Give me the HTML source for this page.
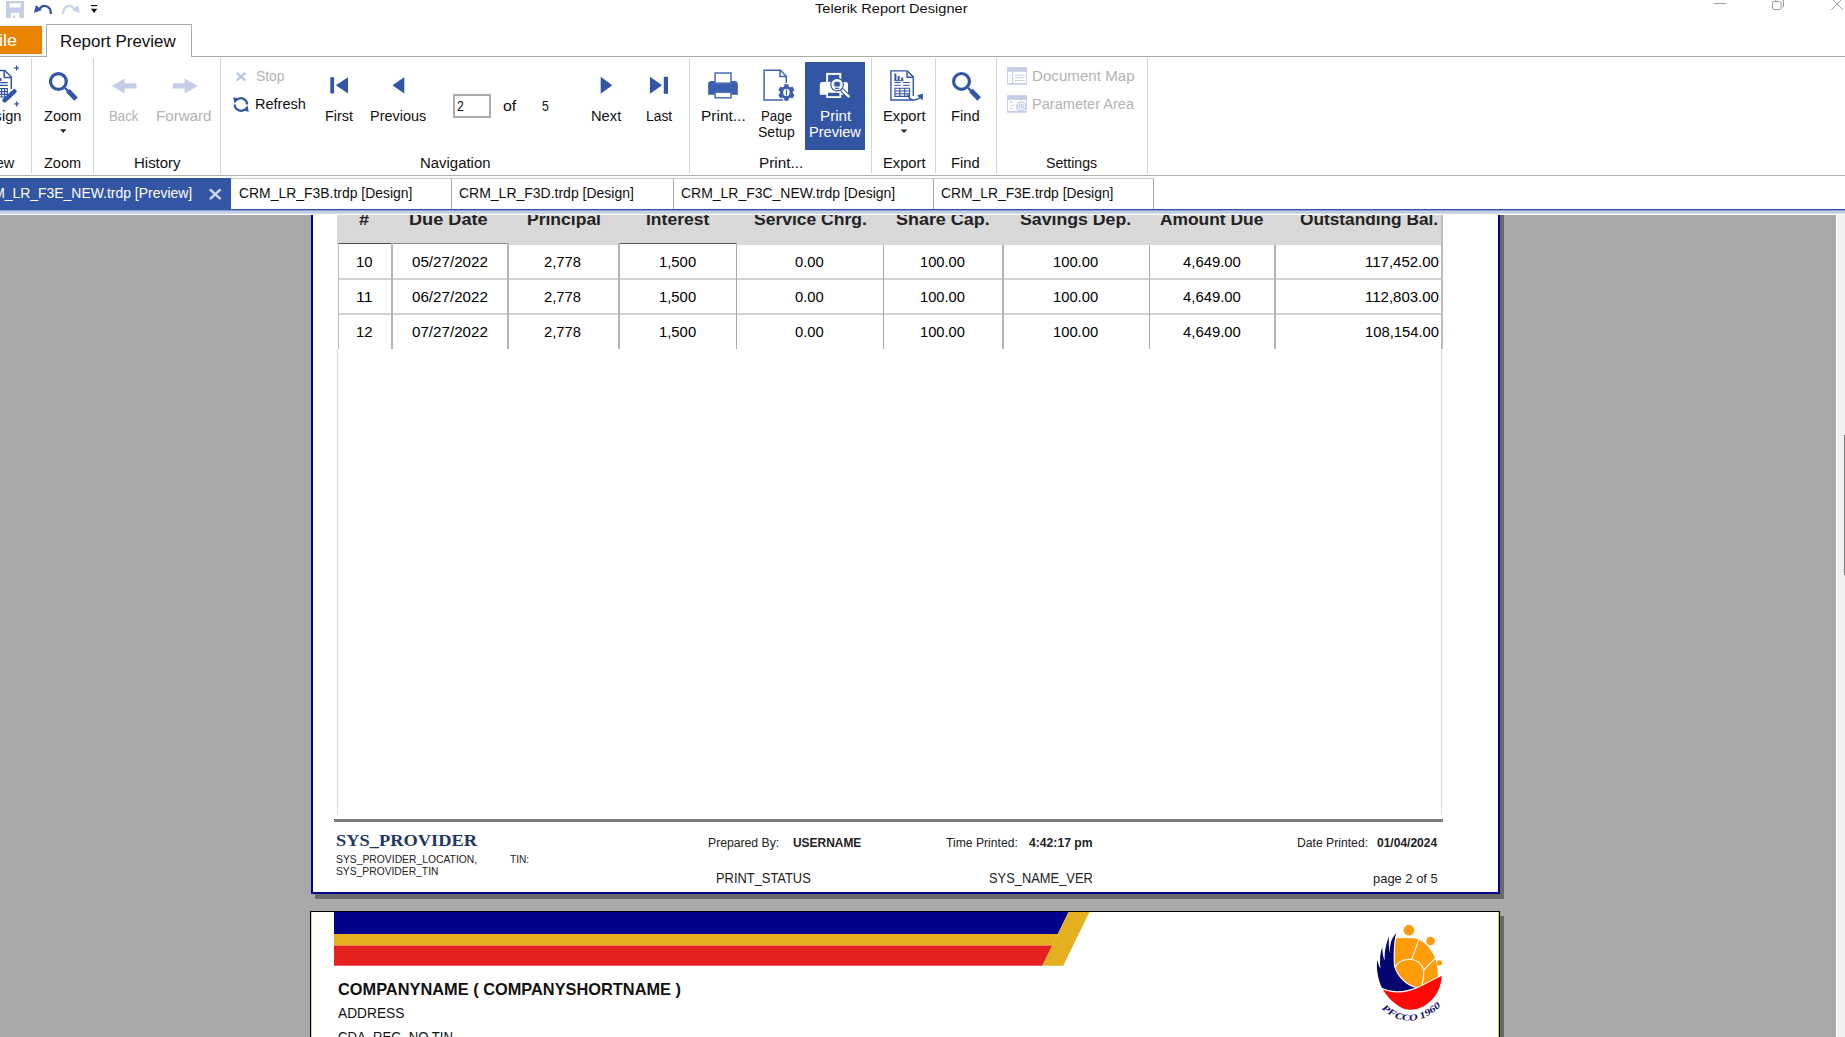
<!DOCTYPE html>
<html lang="en">
<head>
<meta charset="utf-8">
<title>Telerik Report Designer</title>
<style>
html,body{margin:0;padding:0}
body{width:1845px;height:1037px;overflow:hidden;background:#fff;position:relative;font-family:"Liberation Sans",sans-serif;color:#1e1e1e}
.a{position:absolute}
.t{position:absolute;white-space:pre;line-height:1;transform-origin:0 0}
svg{position:absolute;overflow:visible}
#vp{position:absolute;left:0;top:215px;width:1836px;height:822px;overflow:hidden;background:#a9a9a9}
.sep{position:absolute;top:58px;width:1px;height:115px;background:#d4d4d4}
.vl{position:absolute;top:30px;height:104px;background:#b4b4b4}
.hl{position:absolute;left:338px;width:1105px;height:2px;background:#d2d2d2}
</style>
</head>
<body>
<!-- ===== title bar / quick access toolbar ===== -->
<div id="titlebar" class="a" style="left:0;top:0;width:1845px;height:24px;background:#fff"></div>
<!-- save (disabled) -->
<svg id="ico-save" style="left:6px;top:1px" width="18" height="17" viewBox="0 0 18 17"><path fill="#c3cde6" fill-rule="evenodd" d="M0 0H18V17H0Z M3.5 2.2V6.4H14.5V2.2Z M4.7 11.7V17H13.2V11.7Z"/><rect x="6.9" y="14.4" width="2.4" height="2.6" fill="#c3cde6"/></svg>
<!-- undo -->
<svg id="ico-undo" style="left:33px;top:3px" width="20" height="12" viewBox="33 3 20 12"><path d="M39.5 8.8 C43.2 3.6 50.8 5.6 50.9 14.0" stroke="#3356a4" stroke-width="2.2" fill="none"/><path d="M35.8 5.0 L41.8 9.9 L34.0 12.9 Z" fill="#3356a4"/></svg>
<!-- redo (disabled) -->
<svg id="ico-redo" style="left:61px;top:3px" width="20" height="12" viewBox="61 3 20 12"><path d="M74.4 8.8 C70.7 3.6 63.1 5.6 63.0 14.0" stroke="#c9d3ea" stroke-width="2.2" fill="none"/><path d="M78.1 5.0 L72.1 9.9 L79.9 12.9 Z" fill="#c9d3ea"/></svg>
<!-- qat dropdown -->
<svg id="ico-qat" style="left:90px;top:4px" width="8" height="10" viewBox="90 4 8 10"><rect x="90.9" y="5" width="6.4" height="1.2" fill="#111"/><path d="M90.9 8.8 H97.3 L94.1 12.9 Z" fill="#111"/></svg>
<!-- window controls -->
<svg id="win-ctl" style="left:1700px;top:0" width="145" height="16" viewBox="1700 0 145 16"><g stroke="#9a9a9a" stroke-width="1" fill="none"><path d="M1714 3.5 H1726"/><rect x="1772.5" y="1.5" width="8.5" height="8" rx="1.5"/><path d="M1775.5 1.5 V0.8 Q1775.5 -0.5 1777 -0.5 H1782 Q1783.5 -0.5 1783.5 1 V6 Q1783.5 7.2 1782.3 7.4"/><path d="M1831.2 -2 L1843 9.9 M1843 -2 L1831.2 9.9"/></g></svg>

<!-- ===== ribbon tab row ===== -->
<div class="a" style="left:0;top:56px;width:1845px;height:1px;background:#ababab"></div>
<div id="filebtn" class="a" style="left:0;top:26px;width:42px;height:28px;background:#e98300"></div>
<div id="tab-report-preview" class="a" style="left:46px;top:24px;width:144px;height:32px;border:1px solid #ababab;border-bottom:none;background:#fff"></div>
<!-- ===== ribbon body ===== -->
<div class="sep" style="left:31px"></div>
<div class="sep" style="left:93px"></div>
<div class="sep" style="left:220px"></div>
<div class="sep" style="left:689px"></div>
<div class="sep" style="left:871px"></div>
<div class="sep" style="left:935px"></div>
<div class="sep" style="left:996px"></div>
<div class="sep" style="left:1147px"></div>
<div id="pagebox" class="a" style="left:453px;top:94px;width:34px;height:20px;border:2px solid #a9aab0;background:#fff"></div>
<div id="btn-printpreview" class="a" style="left:805px;top:62px;width:60px;height:88px;background:#3356a4"></div>
<svg id="ribbon-icons" style="left:0;top:57px" width="1200" height="118" viewBox="0 57 1200 118">
<g id="ico-design" fill="none" stroke="#3356a4" stroke-width="1.5">
  <path d="M-2 70.5 H4.8 L11.3 77 V89"/><path d="M4.2 70.8 V77.4 H11"/>
  <path d="M-2 82.7 H7.8 M-2 85.4 H7.8" stroke-width="1.2"/>
  <path d="M-2 88.6 H7.4 V97 H-2 M-2 91.6 H7.4 M-2 94.4 H7.4 M1.6 88.6 V97 M4.6 88.6 V97" stroke-width="1.1"/>
  <path d="M14.4 91.4 L4.6 100.2" stroke-width="4.6" stroke-linecap="round"/>
  <path d="M16.6 65.6 V70.6 M14.1 68.1 H19.1 M16.6 101.4 V106.4 M14.1 103.9 H19.1" stroke-width="1.3"/>
  <path d="M-1 78 H1.5 V81 H-1" fill="#3356a4" stroke="none"/>
</g>
<g id="ico-zoom" fill="none" stroke="#3356a4"><circle cx="58.4" cy="81.5" r="7.9" stroke-width="3.2"/><path d="M65 88 L70 93" stroke-width="2.4"/><path d="M69.6 92.4 L74.4 97.4" stroke-width="4.9" stroke-linecap="square"/></g>
<g id="ico-back" fill="#c3cde6"><path d="M111.7 85.9 L124.7 78.4 V83.3 H136.4 V88.6 H124.7 V93.4 Z"/></g>
<g id="ico-forward" fill="#c3cde6"><path d="M197.8 85.9 L184.6 78.4 V83.3 H172.9 V88.6 H184.6 V93.4 Z"/></g>
<g id="ico-stop" fill="none" stroke="#bcc8e3" stroke-width="2.3"><path d="M236.6 72.8 L245.4 80.6 M245.4 72.8 L236.6 80.6"/></g>
<g id="ico-refresh" fill="none" stroke="#3356a4" stroke-width="2.2">
  <path d="M237.2 99.6 A6.2 6.2 0 0 1 247.2 104.5"/><path d="M244.8 109.4 A6.2 6.2 0 0 1 234.8 104.5"/>
  <path d="M233.2 97.2 L239.4 98.4 L234.4 103.4 Z" fill="#3356a4" stroke="none"/><path d="M248.8 111.8 L242.6 110.6 L247.6 105.6 Z" fill="#3356a4" stroke="none"/>
</g>
<g id="ico-nav" fill="#3356a4">
  <rect x="330.3" y="77.2" width="3.8" height="16.2"/><path d="M335.9 85.3 L348 77.2 V93.4 Z"/>
  <path d="M392.4 85.3 L404.3 77.2 V93.4 Z"/>
  <path d="M612.3 85.3 L600.7 76.8 V93.8 Z"/>
  <path d="M662 85.3 L650 76.8 V93.8 Z"/><rect x="663.8" y="76.8" width="4.2" height="17"/>
</g>
<g id="ico-print"><path d="M708.1 94.8 V84.4 Q708.1 81 711.5 81 H734.4 Q737.8 81 737.8 84.4 V94.8 Z" fill="#3a5fad"/><rect x="715.1" y="73" width="15.9" height="10.2" fill="#fff" stroke="#4a6cb5" stroke-width="1.5"/><rect x="715.1" y="92.2" width="15.9" height="5.6" fill="#fff" stroke="#4a6cb5" stroke-width="1.5"/></g>
<g id="ico-pagesetup" fill="none" stroke="#4065b0" stroke-width="1.5"><path d="M783 100.1 H764.1 V70.3 H780.4 L786.3 76.2 V83"/><path d="M780 70.6 V76.6 H786"/>
  <g fill="#3a5fad" stroke="none"><circle cx="786.4" cy="92.5" r="6.5"/>
  <g transform="translate(786.4 92.5)"><rect x="-2.2" y="-8.2" width="4.4" height="16.4" rx="0.7"/><rect x="-2.2" y="-8.2" width="4.4" height="16.4" rx="0.7" transform="rotate(60)"/><rect x="-2.2" y="-8.2" width="4.4" height="16.4" rx="0.7" transform="rotate(120)"/></g></g>
  <ellipse cx="786.4" cy="92.4" rx="3.2" ry="3.6" fill="#fff" stroke="none"/><path d="M786.4 89.4 V95.4" stroke="#3a5fad" stroke-width="1.1"/>
</g>
<g id="ico-printpreview"><path d="M819.8 94.8 V84.5 Q819.8 82.1 822.2 82.1 H845.6 Q848 82.1 848 84.5 V94.8 Z" fill="#fff"/><rect x="827.1" y="73.9" width="13.2" height="9" fill="#3356a4" stroke="#fff" stroke-width="2"/><rect x="827.1" y="91.9" width="13.2" height="5.2" fill="#3356a4" stroke="#fff" stroke-width="1.8"/>
  <circle cx="837.1" cy="84.6" r="6.9" fill="#3356a4"/><circle cx="837.1" cy="84.6" r="4.9" fill="#dfe5f2" stroke="#fff" stroke-width="1.6"/><rect x="834.4" y="82" width="5.4" height="4.4" rx="1" fill="#3356a4"/><path d="M835 88.4 H839.2" stroke="#3356a4" stroke-width="1"/>
  <path d="M842.6 90.6 L848.6 96.4" stroke="#3356a4" stroke-width="4.4" stroke-linecap="round"/><path d="M842.6 90.6 L848.6 96.4" stroke="#fff" stroke-width="2.4" stroke-linecap="round"/>
</g>
<g id="ico-export" fill="none" stroke="#3356a4" stroke-width="1.4"><path d="M912.6 100 H890.9 V70.9 H907.3 L913.3 76.9 V96"/><path d="M907 71.2 V77.2 H913"/>
  <path d="M895.4 73.6 V80.6 M898.6 76 V80.6 M902.2 77.4 V80.6" stroke-width="2"/><path d="M894.4 80.7 H903.4" stroke-width="1"/>
  <path d="M894.5 82.5 H900.5 M903 82.5 H909.8 M894.5 85.3 H900.5 M903 85.3 H909.8" stroke-width="1"/>
  <path d="M894.9 88.2 H909.6 V96.4 H894.9 Z M894.9 91 H909.6 M894.9 93.7 H909.6 M899.8 88.2 V96.4 M904.7 88.2 V96.4" stroke-width="1.1"/>
  <path d="M907.4 94.2 Q909.6 101.4 916.4 99.6 Q919.6 98.6 920.6 96" stroke-width="1.5"/><path d="M923 93.6 L922.6 100.6 L917 95.4 Z" fill="#3356a4" stroke="none"/>
</g>
<g id="ico-find" fill="none" stroke="#3356a4"><circle cx="961.5" cy="81.4" r="7.9" stroke-width="3.2"/><path d="M968.1 87.9 L973.1 92.9" stroke-width="2.4"/><path d="M972.7 92.3 L977.5 97.3" stroke-width="4.9" stroke-linecap="square"/></g>
<g id="ico-docmap"><rect x="1007.1" y="67.1" width="19.9" height="17.7" fill="#c3cde6"/><rect x="1008" y="71.8" width="4" height="11.3" fill="#fff"/><rect x="1013.1" y="71.8" width="13.1" height="11.3" fill="#fff"/>
  <path d="M1015 75.4 H1024.8 M1015 77.6 H1024.8 M1015 80.5 H1024.8" stroke="#c3cde6" stroke-width="0.9"/><path d="M1010 75 V76 M1010 77.2 V78.2 M1010 80 V81" stroke="#c3cde6" stroke-width="1"/></g>
<g id="ico-paramarea"><rect x="1007.1" y="95.2" width="19.9" height="17.5" fill="#c3cde6"/><rect x="1008" y="99.9" width="18.2" height="11.1" fill="#fff"/>
  <rect x="1010.2" y="101.2" width="1.8" height="1.8" fill="#c3cde6"/><path d="M1010.2 105.4 H1011.2 M1012 105.4 H1014.8 M1010.2 108.4 H1013" stroke="#c3cde6" stroke-width="0.9"/>
  <circle cx="1021.3" cy="106.4" r="4.6" fill="#eef1f8" stroke="#c3cde6" stroke-width="1.3"/><path d="M1019.4 104.4 V108.6 M1021.4 103.8 V109 M1023.4 104.4 V108.6" stroke="#c3cde6" stroke-width="1"/></g>
<g id="drop-arrows" fill="#222"><path d="M60.1 129.3 H66.3 L63.2 133 Z"/><path d="M900.7 129.4 H907.3 L904 133 Z"/></g>
</svg>

<div class="a" style="left:0;top:175px;width:1845px;height:1px;background:#b0b0b0"></div>
<!-- ===== document tabs ===== -->
<div class="a" style="left:231px;top:178px;width:922px;height:1px;background:#c8c8c8"></div>
<div id="doctab-active" class="a" style="left:0;top:178px;width:231px;height:31px;background:#3356a4"></div>
<div class="a" style="left:451px;top:178px;width:1px;height:31px;background:#ababab"></div>
<div class="a" style="left:673px;top:178px;width:1px;height:31px;background:#ababab"></div>
<div class="a" style="left:933px;top:178px;width:1px;height:31px;background:#ababab"></div>
<div class="a" style="left:1153px;top:178px;width:1px;height:31px;background:#ababab"></div>
<svg id="tab-close" style="left:209px;top:188px" width="13" height="12" viewBox="0 0 13 12"><path d="M0.9 1.3 L11.6 11.1 M11.6 1.3 L0.9 11.1" stroke="#cdd6ea" stroke-width="2.5" fill="none"/></svg>
<div class="a" style="left:0;top:209px;width:1845px;height:1px;background:#3356a4"></div>
<div class="a" style="left:0;top:210px;width:1845px;height:1px;background:#8c9fcc"></div>
<div class="a" style="left:0;top:211px;width:1845px;height:2px;background:#c4cfe7"></div>
<div class="a" style="left:0;top:213px;width:1845px;height:1px;background:#d2daed"></div>
<!-- ===== scrollbar ===== -->
<div class="a" style="left:1837px;top:215px;width:8px;height:822px;background:#f0f0f0"></div>
<div class="a" style="left:1844px;top:435px;width:1px;height:140px;background:#7a7a7a"></div>
<!-- ===== report viewport ===== -->
<div id="vp">
  <!-- page 1 -->
  <div class="a" style="left:1500px;top:-10px;width:4px;height:694px;background:#696969"></div>
  <div class="a" style="left:315px;top:679px;width:1189px;height:5px;background:#696969"></div>
  <div id="page1" class="a" style="left:311px;top:-10px;width:1185px;height:685px;border:2px solid #00008b;background:#fff"></div>
  <!-- table header -->
  <div class="a" style="left:337px;top:0;width:1104px;height:30px;background:#d9d9d9"></div>
  <!-- detail side lines -->
  <div class="a" style="left:337px;top:134px;width:1px;height:466px;background:#dcdcdc"></div>
  <div class="a" style="left:1441px;top:134px;width:1px;height:466px;background:#dcdcdc"></div>
  <!-- white cell tops for #, Due Date, Interest -->
  <div class="a" style="left:338px;top:28px;width:170px;height:2px;background:#fff"></div>
  <div class="a" style="left:620px;top:28px;width:117px;height:2px;background:#fff"></div>
  <div class="a" style="left:338px;top:28px;width:54px;height:1px;background:#4c4c4c"></div>
  <div class="a" style="left:392px;top:28px;width:116px;height:1px;background:#8c8c8c"></div>
  <div class="a" style="left:620px;top:28px;width:117px;height:1px;background:#555"></div>
  <!-- row lines -->
  <div class="hl" style="top:63px"></div>
  <div class="hl" style="top:98px"></div>
  <!-- column lines -->
  <div class="vl" style="left:338px;width:1px;top:28px;height:106px;background:#bdbdbd"></div>
  <div class="vl" style="left:391px;width:2px;top:28px;height:106px"></div>
  <div class="vl" style="left:507px;width:2px;top:28px;height:106px"></div>
  <div class="vl" style="left:618px;width:2px;top:28px;height:106px"></div>
  <div class="vl" style="left:736px;width:1px;top:28px;height:106px;background:#aaa"></div>
  <div class="vl" style="left:883px;width:1px;background:#aaa"></div>
  <div class="vl" style="left:1002px;width:2px"></div>
  <div class="vl" style="left:1149px;width:1px;background:#aaa"></div>
  <div class="vl" style="left:1274px;width:2px"></div>
  <div class="vl" style="left:1441px;width:2px;top:0;height:134px;background:#bdbdbd"></div>
  <!-- footer rule -->
  <div class="a" style="left:334px;top:604px;width:1109px;height:3px;background:#7c7c7c"></div>
  <!-- page 2 -->
  <div class="a" style="left:1500px;top:701px;width:4px;height:200px;background:#696969"></div>
  <div id="page2" class="a" style="left:310px;top:696px;width:1188px;height:200px;border:1px solid #000;background:#fff"></div>
  <div class="a" style="left:311px;top:697px;width:1px;height:200px;background:#cfe07e"></div>
  <div class="a" style="left:1498px;top:697px;width:1px;height:200px;background:#c2d663"></div>
  <svg style="left:334px;top:697px" width="760" height="54" viewBox="334 912 760 54">
    <polygon points="334,912 1068.6,912 1057.9,934 334,934" fill="#00008b"/>
    <polygon points="334,934 1057.9,934 1052.3,945.6 334,945.6" fill="#e5b020"/>
    <polygon points="334,945.6 1052.3,945.6 1042.4,965.8 334,965.8" fill="#e32121"/>
    <polygon points="1068.6,912 1089.4,912 1063.2,965.8 1042.4,965.8" fill="#e5b020"/>
  </svg>
  <svg id="logo" style="left:1360px;top:697px" width="100" height="118" viewBox="0 0 879 1037">
    <g fill="#ff9c0a"><circle cx="430" cy="160" r="47"/><circle cx="620" cy="255" r="38"/><circle cx="698" cy="447" r="24"/>
      <path d="M303 262 Q300 232 338 229 L478 231 Q578 250 648 378 Q690 478 682 585 L560 652 L500 672 Q340 602 300 480 Z"/></g>
    <g fill="none" stroke="#fff" stroke-width="10"><path d="M517 246 L455 412"/><path d="M304 500 Q330 420 440 415 Q540 425 560 512 Q562 590 542 655"/><path d="M558 512 L660 408"/></g>
    <path fill="#050570" d="M330 176 C306 214 294 300 300 470 C330 580 420 650 502 668 C400 704 260 712 195 672 C160 600 140 500 152 420 C163 470 170 482 180 494 C170 420 180 350 196 308 C197 370 206 402 217 424 C214 350 230 270 256 214 C248 270 256 335 267 364 C256 300 272 226 330 176 Z"/>
    <path d="M332 172 C306 214 296 300 302 470 C332 580 420 648 506 666" fill="none" stroke="#fff" stroke-width="9"/>
    <path fill="#ff0808" stroke="#fff" stroke-width="9" d="M193 673 C300 722 420 702 520 657 C600 622 680 572 722 553 C724 640 684 762 562 832 C482 872 400 872 340 832 C260 782 215 722 193 673 Z"/>
    <g font-family="Liberation Serif, serif" font-weight="700" font-style="italic" font-size="80" fill="#0a0a6a"><text transform="translate(189.7 850.7) rotate(38.3) scale(1.310 1)">P</text><text transform="translate(239.8 890.7) rotate(30.4) scale(1.310 1)">F</text><text transform="translate(300.2 926.3) rotate(19.7) scale(1.310 1)">C</text><text transform="translate(366.2 950.1) rotate(6.7) scale(1.310 1)">C</text><text transform="translate(436.0 958.6) rotate(-7.6) scale(1.310 1)">O</text><text transform="translate(536.0 939.5) rotate(-23.1) scale(1.310 1)">1</text><text transform="translate(584.2 918.8) rotate(-30.2) scale(1.310 1)">9</text><text transform="translate(629.4 892.4) rotate(-35.9) scale(1.310 1)">6</text><text transform="translate(671.8 861.6) rotate(-40.6) scale(1.310 1)">0</text></g>
  </svg>

  <div class="t" style='left:359.40px;top:-3.40px;font-size:16px;font-weight:700;color:#222;transform:scaleX(1.1333)'>#</div>
  <div class="t" style='left:409.46px;top:-3.40px;font-size:16px;font-weight:700;color:#222;transform:scaleX(1.1351)'>Due Date</div>
  <div class="t" style='left:526.61px;top:-3.40px;font-size:16px;font-weight:700;color:#222;transform:scaleX(1.0948)'>Principal</div>
  <div class="t" style='left:645.91px;top:-3.40px;font-size:16px;font-weight:700;color:#222;transform:scaleX(1.0945)'>Interest</div>
  <div class="t" style='left:753.70px;top:-3.40px;font-size:16px;font-weight:700;color:#222;transform:scaleX(1.0934)'>Service Chrg.</div>
  <div class="t" style='left:895.80px;top:-3.40px;font-size:16px;font-weight:700;color:#222;transform:scaleX(1.1210)'>Share Cap.</div>
  <div class="t" style='left:1020.40px;top:-3.40px;font-size:16px;font-weight:700;color:#222;transform:scaleX(1.1057)'>Savings Dep.</div>
  <div class="t" style='left:1160.10px;top:-3.40px;font-size:16px;font-weight:700;color:#222;transform:scaleX(1.0861)'>Amount Due</div>
  <div class="t" style='left:1300.40px;top:-3.40px;font-size:16px;font-weight:700;color:#222;transform:scaleX(1.0788)'>Outstanding Bal.</div>
  <div class="t" style='left:356.01px;top:39.10px;font-size:15px;color:#000;transform:scaleX(0.9907)'>10</div>
  <div class="t" style='left:412.10px;top:39.10px;font-size:15px;color:#000;transform:scaleX(1.0103)'>05/27/2022</div>
  <div class="t" style='left:544.40px;top:39.10px;font-size:15px;color:#000;transform:scaleX(0.9813)'>2,778</div>
  <div class="t" style='left:659.01px;top:39.10px;font-size:15px;color:#000;transform:scaleX(0.9891)'>1,500</div>
  <div class="t" style='left:795.30px;top:39.10px;font-size:15px;color:#000;transform:scaleX(0.9843)'>0.00</div>
  <div class="t" style='left:920.12px;top:39.10px;font-size:15px;color:#000;transform:scaleX(0.9790)'>100.00</div>
  <div class="t" style='left:1053.02px;top:39.10px;font-size:15px;color:#000;transform:scaleX(0.9835)'>100.00</div>
  <div class="t" style='left:1183.40px;top:39.10px;font-size:15px;color:#000;transform:scaleX(0.9906)'>4,649.00</div>
  <div class="t" style='left:1365.10px;top:39.10px;font-size:15px;color:#000;transform:scaleX(0.9998)'>117,452.00</div>
  <div class="t" style='left:355.93px;top:74.00px;font-size:15px;color:#000;transform:scaleX(1.0682)'>11</div>
  <div class="t" style='left:412.10px;top:74.00px;font-size:15px;color:#000;transform:scaleX(1.0103)'>06/27/2022</div>
  <div class="t" style='left:544.40px;top:74.00px;font-size:15px;color:#000;transform:scaleX(0.9813)'>2,778</div>
  <div class="t" style='left:659.01px;top:74.00px;font-size:15px;color:#000;transform:scaleX(0.9891)'>1,500</div>
  <div class="t" style='left:795.30px;top:74.00px;font-size:15px;color:#000;transform:scaleX(0.9843)'>0.00</div>
  <div class="t" style='left:920.12px;top:74.00px;font-size:15px;color:#000;transform:scaleX(0.9790)'>100.00</div>
  <div class="t" style='left:1053.02px;top:74.00px;font-size:15px;color:#000;transform:scaleX(0.9835)'>100.00</div>
  <div class="t" style='left:1183.40px;top:74.00px;font-size:15px;color:#000;transform:scaleX(0.9906)'>4,649.00</div>
  <div class="t" style='left:1365.10px;top:74.00px;font-size:15px;color:#000;transform:scaleX(0.9998)'>112,803.00</div>
  <div class="t" style='left:356.01px;top:109.00px;font-size:15px;color:#000;transform:scaleX(0.9907)'>12</div>
  <div class="t" style='left:412.10px;top:109.00px;font-size:15px;color:#000;transform:scaleX(1.0103)'>07/27/2022</div>
  <div class="t" style='left:544.40px;top:109.00px;font-size:15px;color:#000;transform:scaleX(0.9813)'>2,778</div>
  <div class="t" style='left:659.01px;top:109.00px;font-size:15px;color:#000;transform:scaleX(0.9891)'>1,500</div>
  <div class="t" style='left:795.30px;top:109.00px;font-size:15px;color:#000;transform:scaleX(0.9843)'>0.00</div>
  <div class="t" style='left:920.12px;top:109.00px;font-size:15px;color:#000;transform:scaleX(0.9790)'>100.00</div>
  <div class="t" style='left:1053.02px;top:109.00px;font-size:15px;color:#000;transform:scaleX(0.9835)'>100.00</div>
  <div class="t" style='left:1183.40px;top:109.00px;font-size:15px;color:#000;transform:scaleX(0.9906)'>4,649.00</div>
  <div class="t" style='left:1365.12px;top:109.00px;font-size:15px;color:#000;transform:scaleX(0.9847)'>108,154.00</div>
  <div class="t" style='left:336.20px;top:617.00px;font-size:17px;font-weight:700;font-family:"Liberation Serif", serif;color:#1f3864;transform:scaleX(1.0818)'>SYS_PROVIDER</div>
  <div class="t" style='left:336.00px;top:640.00px;font-size:10px;color:#222;transform:scaleX(1.0343)'>SYS_PROVIDER_LOCATION,</div>
  <div class="t" style='left:336.00px;top:652.00px;font-size:10px;color:#222;transform:scaleX(1.0297)'>SYS_PROVIDER_TIN</div>
  <div class="t" style='left:510.20px;top:640.00px;font-size:10px;color:#222;transform:scaleX(1.0106)'>TIN:</div>
  <div class="t" style='left:708.00px;top:622.00px;font-size:12px;color:#222;transform:scaleX(1.0157)'>Prepared By:</div>
  <div class="t" style='left:793.40px;top:622.00px;font-size:12px;font-weight:700;color:#222;transform:scaleX(0.9946)'>USERNAME</div>
  <div class="t" style='left:946.30px;top:622.00px;font-size:12px;color:#222;transform:scaleX(1.0131)'>Time Printed:</div>
  <div class="t" style='left:1029.30px;top:622.00px;font-size:12px;font-weight:700;color:#222;transform:scaleX(1.0141)'>4:42:17 pm</div>
  <div class="t" style='left:1297.20px;top:622.00px;font-size:12px;color:#222;transform:scaleX(1.0143)'>Date Printed:</div>
  <div class="t" style='left:1376.80px;top:622.00px;font-size:12px;font-weight:700;color:#222;transform:scaleX(1.0019)'>01/04/2024</div>
  <div class="t" style='left:716.08px;top:656.00px;font-size:14px;color:#222;transform:scaleX(0.9203)'>PRINT_STATUS</div>
  <div class="t" style='left:989.30px;top:656.00px;font-size:14px;color:#222;transform:scaleX(0.9201)'>SYS_NAME_VER</div>
  <div class="t" style='left:1373.00px;top:657.20px;font-size:13.3px;color:#222;transform:scaleX(0.9721)'>page 2 of 5</div>
  <div class="t" style='left:337.80px;top:766.80px;font-size:16.6px;font-weight:700;color:#111;transform:scaleX(0.9861)'>COMPANYNAME ( COMPANYSHORTNAME )</div>
  <div class="t" style='left:337.80px;top:791.40px;font-size:14.3px;color:#111;transform:scaleX(0.9609)'>ADDRESS</div>
  <div class="t" style='left:337.80px;top:814.50px;font-size:14.3px;color:#111;transform:scaleX(0.9178)'>CDA_REG_NO TIN</div>
</div>
<div class="t" style='left:815.20px;top:1.60px;font-size:13.6px;color:#101010;transform:scaleX(1.0736)'>Telerik Report Designer</div>
<div class="t" style='left:-11.79px;top:31.60px;font-size:16.5px;color:#fff;transform:scaleX(1.0900)'>File</div>
<div class="t" style='left:60.06px;top:32.80px;font-size:16.2px;color:#101010;transform:scaleX(1.0449)'>Report Preview</div>
<div class="t" style='left:-24.20px;top:108.60px;font-size:14px;color:#101010;transform:scaleX(1.0400)'>Design</div>
<div class="t" style='left:44.40px;top:108.60px;font-size:14px;color:#101010;transform:scaleX(1.0420)'>Zoom</div>
<div class="t" style='left:108.55px;top:108.60px;font-size:14px;color:#b3b3b3;transform:scaleX(0.9478)'>Back</div>
<div class="t" style='left:155.82px;top:108.60px;font-size:14px;color:#b3b3b3;transform:scaleX(1.0815)'>Forward</div>
<div class="t" style='left:256.40px;top:68.70px;font-size:14px;color:#b3b3b3;transform:scaleX(0.9892)'>Stop</div>
<div class="t" style='left:255.36px;top:96.70px;font-size:14px;color:#101010;transform:scaleX(1.0374)'>Refresh</div>
<div class="t" style='left:324.67px;top:108.60px;font-size:14px;color:#101010;transform:scaleX(1.0295)'>First</div>
<div class="t" style='left:370.47px;top:108.60px;font-size:14px;color:#101010;transform:scaleX(1.0324)'>Previous</div>
<div class="t" style='left:457.20px;top:98.70px;font-size:14px;color:#101010;transform:scaleX(0.8750)'>2</div>
<div class="t" style='left:503.40px;top:98.70px;font-size:14px;color:#101010;transform:scaleX(1.1369)'>of</div>
<div class="t" style='left:541.50px;top:98.70px;font-size:14px;color:#101010;transform:scaleX(0.8750)'>5</div>
<div class="t" style='left:591.45px;top:108.60px;font-size:14px;color:#101010;transform:scaleX(1.0503)'>Next</div>
<div class="t" style='left:645.51px;top:108.60px;font-size:14px;color:#101010;transform:scaleX(0.9894)'>Last</div>
<div class="t" style='left:700.50px;top:108.60px;font-size:14px;color:#101010;transform:scaleX(1.1046)'>Print...</div>
<div class="t" style='left:760.85px;top:108.60px;font-size:14px;color:#101010;transform:scaleX(0.9495)'>Page</div>
<div class="t" style='left:758.30px;top:124.50px;font-size:14px;color:#101010;transform:scaleX(1.0027)'>Setup</div>
<div class="t" style='left:819.51px;top:108.60px;font-size:14px;color:#fff;transform:scaleX(1.0862)'>Print</div>
<div class="t" style='left:808.66px;top:124.50px;font-size:14px;color:#fff;transform:scaleX(1.0406)'>Preview</div>
<div class="t" style='left:882.65px;top:108.60px;font-size:14px;color:#101010;transform:scaleX(1.0512)'>Export</div>
<div class="t" style='left:951.45px;top:108.60px;font-size:14px;color:#101010;transform:scaleX(1.0531)'>Find</div>
<div class="t" style='left:1031.52px;top:68.80px;font-size:14px;color:#b3b3b3;transform:scaleX(1.0803)'>Document Map</div>
<div class="t" style='left:1031.56px;top:96.80px;font-size:14px;color:#b3b3b3;transform:scaleX(1.0405)'>Parameter Area</div>
<div class="t" style='left:-17.22px;top:155.80px;font-size:14px;color:#101010;transform:scaleX(1.0400)'>View</div>
<div class="t" style='left:44.40px;top:155.80px;font-size:14px;color:#101010;transform:scaleX(1.0363)'>Zoom</div>
<div class="t" style='left:133.63px;top:155.80px;font-size:14px;color:#101010;transform:scaleX(1.0691)'>History</div>
<div class="t" style='left:419.63px;top:155.80px;font-size:14px;color:#101010;transform:scaleX(1.0658)'>Navigation</div>
<div class="t" style='left:758.60px;top:155.80px;font-size:14px;color:#101010;transform:scaleX(1.0968)'>Print...</div>
<div class="t" style='left:882.65px;top:155.80px;font-size:14px;color:#101010;transform:scaleX(1.0512)'>Export</div>
<div class="t" style='left:951.45px;top:155.80px;font-size:14px;color:#101010;transform:scaleX(1.0531)'>Find</div>
<div class="t" style='left:1046.30px;top:155.80px;font-size:14px;color:#101010;transform:scaleX(1.0102)'>Settings</div>
<div class="t" style='left:-27.14px;top:185.60px;font-size:14.6px;color:#fff;transform:scaleX(0.9550)'>CRM_LR_F3E_NEW.trdp [Preview]</div>
<div class="t" style='left:239.40px;top:185.60px;font-size:14.6px;color:#101010;transform:scaleX(0.9542)'>CRM_LR_F3B.trdp [Design]</div>
<div class="t" style='left:459.30px;top:185.60px;font-size:14.6px;color:#101010;transform:scaleX(0.9582)'>CRM_LR_F3D.trdp [Design]</div>
<div class="t" style='left:680.80px;top:185.60px;font-size:14.6px;color:#101010;transform:scaleX(0.9567)'>CRM_LR_F3C_NEW.trdp [Design]</div>
<div class="t" style='left:941.20px;top:185.60px;font-size:14.6px;color:#101010;transform:scaleX(0.9492)'>CRM_LR_F3E.trdp [Design]</div>
</body>
</html>
